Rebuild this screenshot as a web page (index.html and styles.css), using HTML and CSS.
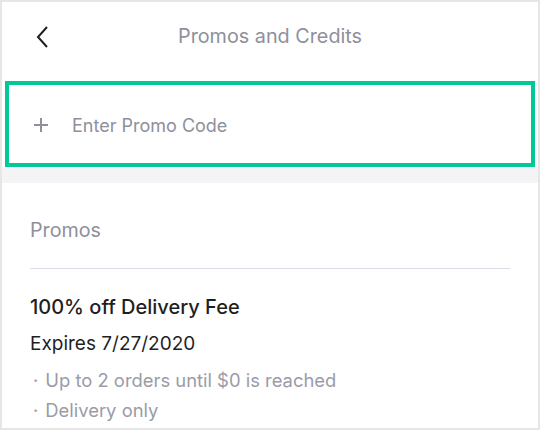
FILE: index.html
```html
<!DOCTYPE html>
<html>
<head>
<meta charset="utf-8">
<link rel="stylesheet" href="styles.css">
</head>
<body>
<div class="frame">
  <header class="header">
    <svg class="back" width="14" height="24" viewBox="0 0 14 24"><path d="M12 2 L3 12 L12 22" fill="none" stroke="#1f1f1f" stroke-width="2"/></svg>
    <div class="title">Promos and Credits</div>
  </header>
  <div class="promo-input">
    <svg class="plus" width="14" height="14" viewBox="0 0 14 14"><path d="M7 0 V14 M0 7 H14" stroke="#8e909b" stroke-width="2"/></svg>
    <span class="placeholder">Enter Promo Code</span>
  </div>
  <div class="band"></div>
  <section class="section">
    <div class="section-title">Promos</div>
    <div class="promo">
      <div class="promo-name">100% off Delivery Fee</div>
      <div class="promo-exp">Expires 7/27/2020</div>
      <ul class="promo-terms">
        <li>Up to 2 orders until $0 is reached</li>
        <li>Delivery only</li>
      </ul>
    </div>
  </section>
</div>
</body>
</html>
```
FILE: styles.css
```css
html, body { margin: 0; padding: 0; background: #fff; }
body { font-family: Inter, "Noto Sans", sans-serif; }
.frame {
  width: 540px; height: 430px; box-sizing: border-box;
  border: 2px solid #e6e6e6; overflow: hidden; background: #fff;
}
.header { position: relative; height: 79px; box-sizing: border-box; padding-top: 20px; text-align: center; }
.back { position: absolute; left: 33px; top: 23px; }
.title { font-size: 19.8px; line-height: 28px; color: #8e909b; }
.promo-input {
  margin: 0 3px; height: 86px; box-sizing: border-box; border: 4px solid #00c896;
  display: flex; align-items: center; padding-left: 25px; padding-top: 2px;
}
.plus { margin-right: 24px; flex: none; }
.placeholder { font-size: 18px; color: #8e909b; }
.band { height: 16px; background: #f4f4f6; }
.section { padding: 0 28px; }
.section-title { font-size: 19.7px; line-height: 28px; color: #8e909b; padding: 33px 0 24px; border-bottom: 1px solid #dcdce4; }
.promo { padding-top: 24px; }
.promo-name { font-size: 20px; line-height: 28px; font-weight: 500; color: #1f1f1f; }
.promo-exp { font-size: 19px; line-height: 26px; color: #1f1f1f; margin-top: 10px; }
.promo-terms { list-style: none; margin: 8px 0 0; padding: 0; }
.promo-terms li { font-size: 18.4px; color: #9a9ca8; line-height: 30px; }
.promo-terms li::before { content: "·"; margin: 0 7px 0 3px; }
```
